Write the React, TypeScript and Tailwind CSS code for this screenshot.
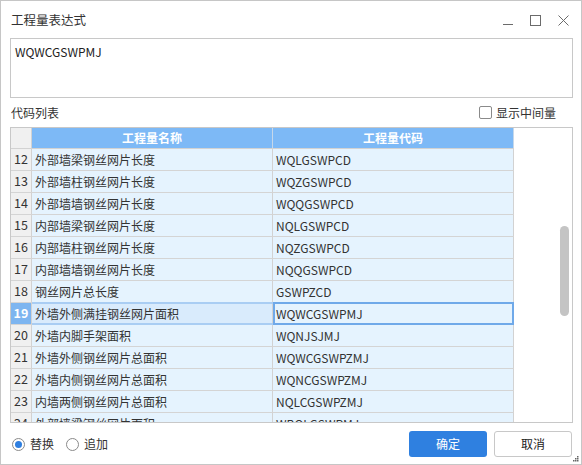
import React from "react";

const rows: [string, string, string][] = [
  ["12", "外部墙梁钢丝网片长度", "WQLGSWPCD"],
  ["13", "外部墙柱钢丝网片长度", "WQZGSWPCD"],
  ["14", "外部墙墙钢丝网片长度", "WQQGSWPCD"],
  ["15", "内部墙梁钢丝网片长度", "NQLGSWPCD"],
  ["16", "内部墙柱钢丝网片长度", "NQZGSWPCD"],
  ["17", "内部墙墙钢丝网片长度", "NQQGSWPCD"],
  ["18", "钢丝网片总长度", "GSWPZCD"],
  ["19", "外墙外侧满挂钢丝网片面积", "WQWCGSWPMJ"],
  ["20", "外墙内脚手架面积", "WQNJSJMJ"],
  ["21", "外墙外侧钢丝网片总面积", "WQWCGSWPZMJ"],
  ["22", "外墙内侧钢丝网片总面积", "WQNCGSWPZMJ"],
  ["23", "内墙两侧钢丝网片总面积", "NQLCGSWPZMJ"],
  ["24", "外部墙梁钢丝网片面积", "WBQLGSWPMJ"],
];

const font = { fontFamily: '"Noto Sans CJK SC", "Noto Sans", sans-serif' };

export default function App() {
  return (
    <div
      className="w-[582px] h-[465px] bg-white border border-[#c6c6c6] flex flex-col text-[#333] relative"
      style={font}
    >
      {/* title bar */}
      <div className="h-[37px] flex items-center pl-[10px] pr-[12px] shrink-0">
        <div className="text-[12.5px] text-[#333] flex-1 leading-none pt-[2px]">工程量表达式</div>
        <div className="flex items-center gap-[17px] pt-[2px]">
          <svg width="10" height="10" viewBox="0 0 10 10">
            <line x1="0" y1="8.5" x2="10" y2="8.5" stroke="#6b6b6b" strokeWidth="1" />
          </svg>
          <svg width="11" height="11" viewBox="0 0 11 11">
            <rect x="0.5" y="0.5" width="10" height="10" fill="none" stroke="#6b6b6b" strokeWidth="1" />
          </svg>
          <svg width="11" height="11" viewBox="0 0 11 11">
            <path d="M0.5 0.5 L10.5 10.5 M10.5 0.5 L0.5 10.5" stroke="#6b6b6b" strokeWidth="1" />
          </svg>
        </div>
      </div>

      {/* expression box */}
      <div className="ml-[9px] w-[563px] h-[60px] border border-[#c8c8c8] px-[4px] pt-[5px] text-[12px] leading-[16px] text-[#222] shrink-0">
        WQWCGSWPMJ
      </div>

      {/* label row */}
      <div className="h-[29px] flex items-center ml-[10px] mr-[25px] shrink-0">
        <div className="text-[12px] flex-1 pt-[1px]">代码列表</div>
        <div className="flex items-center gap-[4px]">
          <div className="w-[13px] h-[13px] border border-[#8a8a8a] rounded-[2px] bg-white" />
          <span className="text-[12px] text-[#333]">显示中间量</span>
        </div>
      </div>

      {/* grid */}
      <div className="ml-[9px] w-[563px] h-[296px] border border-[#c8c8c8] overflow-hidden relative shrink-0 bg-white">
        <div className="flex flex-col w-[503px]">
          <div className="flex h-[21px] border-b border-[#d2d2d2]">
            <div className="w-[21px] bg-[#f0f0f0] border-r border-[#d2d2d2]" />
            <div className="w-[241px] bg-[#7db9f6] border-r border-[#c6d8ea] flex items-center justify-center text-white text-[12px] font-bold">
              工程量名称
            </div>
            <div className="w-[241px] bg-[#7db9f6] border-r border-[#c6d8ea] flex items-center justify-center text-white text-[12px] font-bold">
              工程量代码
            </div>
          </div>
          {rows.map(([n, name, code]) => {
            const sel = n === "19";
            return (
              <div key={n} className="flex h-[22px] border-b border-[#d4d4d4] relative">
                <div
                  className={
                    sel
                      ? "w-[21px] bg-[#7db5f0] border-r border-[#d2d2d2] flex items-center justify-center text-[12.5px] text-white font-bold"
                      : "w-[21px] bg-[#f0f0f0] border-r border-[#d2d2d2] flex items-center justify-center text-[12.5px] text-[#333]"
                  }
                >
                  {n}
                </div>
                <div
                  className={
                    sel
                      ? "w-[241px] bg-[#d9ebfc] border-r border-[#d2d2d2] flex items-center pl-[3px] text-[12px] text-[#333]"
                      : "w-[241px] bg-[#e5f3fe] border-r border-[#d2d2d2] flex items-center pl-[3px] text-[12px] text-[#333]"
                  }
                >
                  {name}
                </div>
                <div
                  className={
                    sel
                      ? "w-[241px] bg-[#e5f3fe] border-r border-[#d2d2d2] flex items-center pl-[3px] text-[12px] text-[#333]"
                      : "w-[241px] bg-[#e5f3fe] border-r border-[#d2d2d2] flex items-center pl-[3px] text-[12px] text-[#333]"
                  }
                >
                  {code}
                </div>
                {sel && (
                  <>
                    <div className="absolute left-[21px] top-[-1px] w-[241px] h-[23px] border-y-2 border-[#a9cdf3] pointer-events-none" />
                    <div className="absolute left-[262px] top-[-1px] w-[241px] h-[23px] border-2 border-[#6fa9e9] pointer-events-none" />
                  </>
                )}
              </div>
            );
          })}
        </div>
        {/* scrollbar thumb */}
        <div className="absolute left-[549px] top-[98px] w-[9px] h-[90px] rounded-full bg-[#c4c4c4]" />
      </div>

      {/* bottom */}
      <div className="flex-1 flex items-center ml-[11px] mr-[9px]">
        <div className="flex items-center flex-1 gap-[12px] pt-[1px]">
          <div className="flex items-center gap-[5px]">
            <div className="w-[13px] h-[13px] rounded-full border border-[#8a8a8a] flex items-center justify-center bg-white">
              <div className="w-[7px] h-[7px] rounded-full bg-[#2f7fe0]" />
            </div>
            <span className="text-[12px]">替换</span>
          </div>
          <div className="flex items-center gap-[5px]">
            <div className="w-[13px] h-[13px] rounded-full border border-[#8a8a8a] bg-white" />
            <span className="text-[12px]">追加</span>
          </div>
        </div>
        <div className="flex items-center gap-[7px]">
          <div className="w-[78px] h-[26px] rounded-[3px] bg-[#2f80e0] text-white text-[12px] flex items-center justify-center">
            确定
          </div>
          <div className="w-[78px] h-[26px] rounded-[3px] bg-white border border-[#c8c8c8] text-[#222] text-[12px] flex items-center justify-center">
            取消
          </div>
        </div>
      </div>

      {/* resize grip */}
      <svg className="absolute right-[2px] bottom-[2px]" width="7" height="7" viewBox="0 0 7 7">
        <rect x="5" y="1" width="1.5" height="1.5" fill="#666" />
        <rect x="3" y="3" width="1.5" height="1.5" fill="#666" />
        <rect x="5" y="3" width="1.5" height="1.5" fill="#666" />
        <rect x="1" y="5" width="1.5" height="1.5" fill="#666" />
        <rect x="3" y="5" width="1.5" height="1.5" fill="#666" />
        <rect x="5" y="5" width="1.5" height="1.5" fill="#666" />
      </svg>
    </div>
  );
}
